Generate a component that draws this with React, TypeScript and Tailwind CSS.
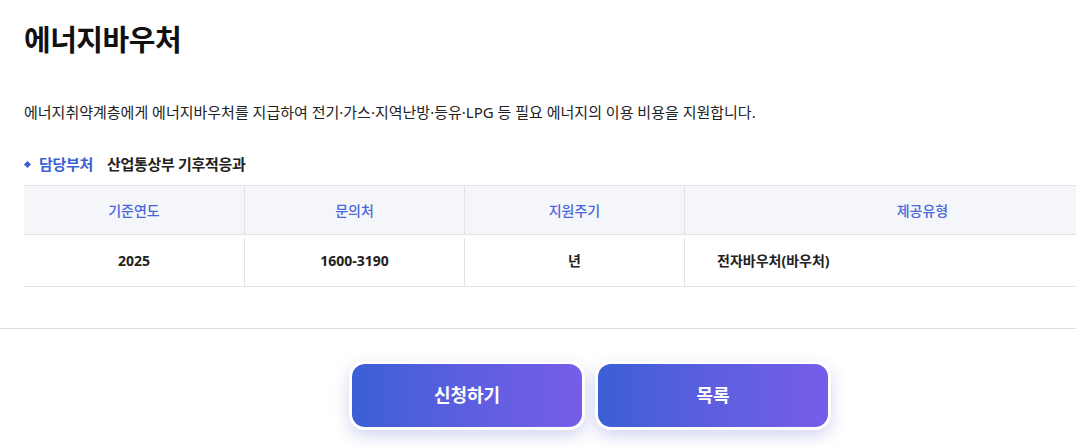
import React from 'react';

const font = { fontFamily: '"Noto Sans", "Noto Sans CJK KR", sans-serif' };

const heads = ['기준연도', '문의처', '지원주기', '제공유형'];

export default function App() {
  return (
    <div className="w-[1076px] h-[447px] overflow-hidden bg-white text-[#111]" style={font}>
      <div className="w-[1180px]">
        <div className="pl-6">
          <h1 className="pt-[18px] text-[29px] font-bold leading-[44px] tracking-[-0.5px]">에너지바우처</h1>
          <p className="mt-[38px] text-[15px] leading-[24px] text-[#222]">
            에너지취약계층에게 에너지바우처를 지급하여 전기·가스·지역난방·등유·LPG 등 필요 에너지의 이용 비용을 지원합니다.
          </p>
          <div className="mt-[29px] flex items-center text-[15px] leading-[22px] font-bold tracking-[-0.3px]">
            <span className="mr-[9px] ml-[1px] w-[5px] h-[5px] rotate-45 bg-[#3d5fd6]" />
            <span className="text-[#3d5fd6]">담당부처</span>
            <span className="ml-[14px] text-[#222]">산업통상부 기후적응과</span>
          </div>
          <div className="mt-[10px] w-[1136px]">
            <div className="grid grid-cols-[220px_220px_220px_476px] bg-[#f5f6fa] border-y border-[#e1e3e8] h-[50px] text-[14px] font-medium text-[#4a68dc]">
              {heads.map((h, i) => (
                <div key={h} className={`flex items-center justify-center ${i > 0 ? 'border-l border-[#e1e3e8]' : ''}`}>
                  {h}
                </div>
              ))}
            </div>
            <div className="grid grid-cols-[220px_220px_220px_476px] border-b border-[#e1e3e8] h-[52px] text-[14px] font-bold text-[#222]">
              <div className="flex items-center justify-center">2025</div>
              <div className="flex items-center justify-center border-l border-[#e1e3e8] mt-[3px]"><span className="-mt-[3px]">1600-3190</span></div>
              <div className="flex items-center justify-center border-l border-[#e1e3e8] mt-[3px]"><span className="-mt-[3px]">년</span></div>
              <div className="flex items-center pl-[32px] border-l border-[#e1e3e8] mt-[3px]"><span className="-mt-[3px]">전자바우처(바우처)</span></div>
            </div>
          </div>
        </div>
        <div className="mt-[41px] border-t border-[#dcdde2]" />
        <div className="mt-[32px] flex justify-center gap-[10px]">
          <button className="w-[236px] h-[69px] rounded-[16px] border-[3px] border-white bg-gradient-to-r from-[#3b5fd6] to-[#775de9] text-white text-[18px] font-bold shadow-[0_6px_16px_rgba(80,90,200,0.25)]">
            신청하기
          </button>
          <button className="w-[236px] h-[69px] rounded-[16px] border-[3px] border-white bg-gradient-to-r from-[#3b5fd6] to-[#775de9] text-white text-[18px] font-bold shadow-[0_6px_16px_rgba(80,90,200,0.25)]">
            목록
          </button>
        </div>
      </div>
    </div>
  );
}
